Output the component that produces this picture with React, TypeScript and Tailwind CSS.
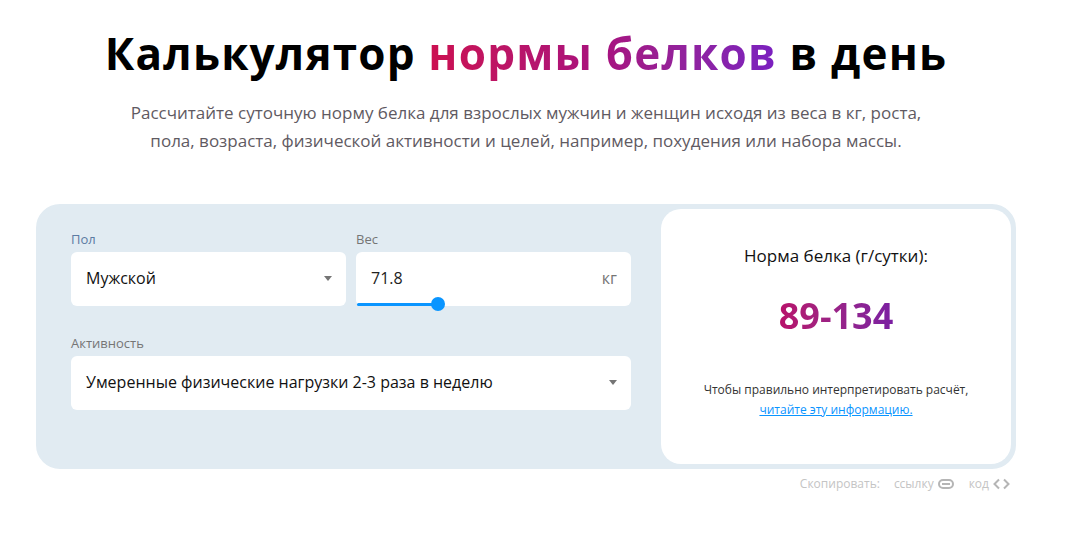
const openSans = "font-['Open_Sans',sans-serif]";

function Caret() {
  return <span className="h-0 w-0 border-x-[4px] border-t-[5px] border-x-transparent border-t-[#757575]" />;
}

function SelectField({ label, value, labelColor }: { label: string; value: string; labelColor: string }) {
  return (
    <div>
      <div className={`h-[18px] text-[13px] leading-[16px] ${labelColor}`}>{label}</div>
      <div className="mt-[3px] flex h-[54px] items-center justify-between rounded-[6px] bg-white pb-[2px] pl-[15px] pr-[14px] text-[16px] text-[#111]">
        <span>{value}</span>
        <Caret />
      </div>
    </div>
  );
}

export default function App() {
  return (
    <div className={`h-[540px] w-[1070px] overflow-hidden bg-white ${openSans}`}>
      <div className="pl-[36px] pr-[54px] pt-[26px]">
        <h1 className="text-center text-[44px] font-bold leading-[54px] tracking-[1.2px] text-black">
          Калькулятор{" "}
          <span className="bg-gradient-to-r from-[#cc0f50] via-[#a8107e] to-[#7a1fc0] bg-clip-text text-transparent">нормы белков</span>{" "}
          в день
        </h1>
        <p className="mx-auto mt-[19px] w-[800px] text-center text-[17px] leading-[28px] text-[#5f5a62]">
          Рассчитайте суточную норму белка для взрослых мужчин и женщин исходя из веса в кг, роста,
          пола, возраста, физической активности и целей, например, похудения или набора массы.
        </p>

        <div className="mt-[49px] flex h-[265px] w-[980px] rounded-[24px] border-[5px] border-[#e1ebf2] bg-[#e1ebf2]">
          <div className="w-[620px] px-[30px] pt-[22px]">
            <div className="grid grid-cols-2 gap-x-[10px]">
              <SelectField label="Пол" value="Мужской" labelColor="text-[#5c7ba3]" />
              <div>
                <div className="h-[18px] text-[13px] leading-[16px] text-[#757575]">Вес</div>
                <div className="relative mt-[3px] flex h-[54px] items-center justify-between rounded-[6px] bg-white pb-[2px] pl-[15px] pr-[14px]">
                  <span className="text-[16px] text-[#222]">71.8</span>
                  <span className="text-[16px] text-[#757575]">кг</span>
                  <div className="absolute bottom-0 left-[1px] h-[3px] w-[80px] rounded-full bg-[#0a95ff]" />
                  <div className="absolute bottom-[-5px] left-[75px] h-[14px] w-[14px] rounded-full bg-[#0a95ff]" />
                </div>
              </div>
            </div>
            <div className="mt-[29px]">
              <SelectField label="Активность" value="Умеренные физические нагрузки 2-3 раза в неделю" labelColor="text-[#757575]" />
            </div>
          </div>

          <div className="flex w-[350px] flex-col items-center rounded-[20px] bg-white pt-[36px]">
            <div className="text-[17px] leading-[22px] text-[#111]">Норма белка (г/сутки):</div>
            <div className="mt-[26px] bg-gradient-to-r from-[#b8106a] to-[#7b1fa2] bg-clip-text text-[36px] font-bold leading-[46px] text-transparent">
              89-134
            </div>
            <div className="mt-[41px] text-center text-[12px] leading-[20px] text-[#333]">
              Чтобы правильно интерпретировать расчёт,
              <br />
              <a className="text-[#0a95ff] underline">читайте эту информацию.</a>
            </div>
          </div>
        </div>

        <div className="mt-[6px] flex w-[974px] items-center justify-end text-[12px] leading-[18px] text-[#c4c4c4]">
          <span>Скопировать:</span>
          <span className="ml-[14px]">ссылку</span>
          <svg viewBox="0 0 16 10" className="ml-[4px] h-[10px] w-[16px]" fill="none" stroke="#b5b5b5" strokeWidth="2">
            <rect x="1" y="1" width="14" height="8" rx="4" />
            <path d="M4 5h8" />
          </svg>
          <span className="ml-[15px]">код</span>
          <svg viewBox="0 0 17 12" className="ml-[4px] h-[12px] w-[17px]" fill="none" stroke="#b5b5b5" strokeWidth="2">
            <path d="M6 1.5 1.5 6 6 10.5" />
            <path d="M11 1.5 15.5 6 11 10.5" />
          </svg>
        </div>
      </div>
    </div>
  );
}
